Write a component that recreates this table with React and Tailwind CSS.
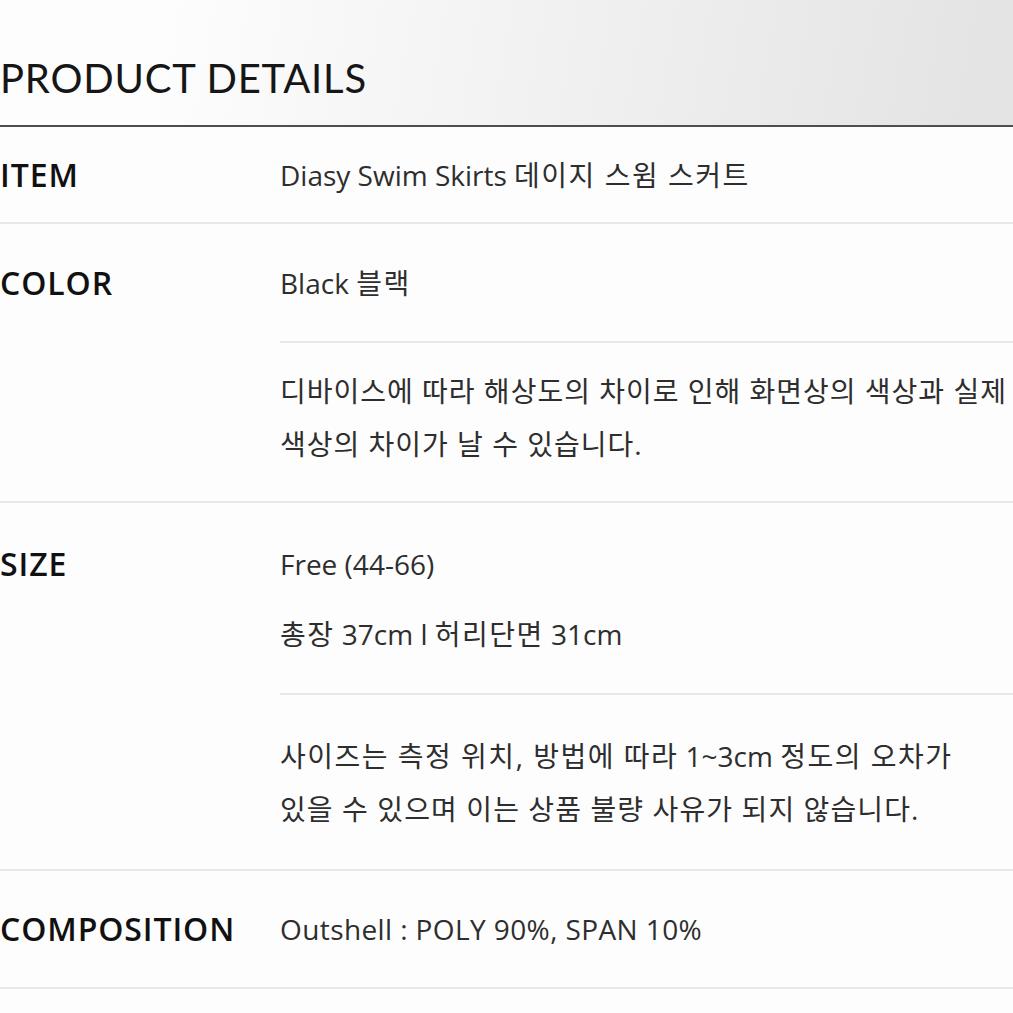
export default function App() {
  const valueFont = { fontFamily: '"Open Sans", "Noto Sans CJK KR", sans-serif' };

  return (
    <div className="w-[1013px] h-[1013px] overflow-hidden bg-[#fdfdfd]">
      <div className="w-[1080px]">
        {/* header */}
        <div className="h-[125px] flex items-end pb-[27px] bg-[linear-gradient(100deg,#fdfdfd_15%,#eeeeee_60%,#e4e4e4_90%)]">
          <h1
            className="text-[40px] leading-none text-[#161616] font-normal tracking-[0.8px]"
            style={{ fontFamily: 'Lato, "Noto Sans", sans-serif' }}
          >
            PRODUCT DETAILS
          </h1>
        </div>
        <div className="h-[2px] bg-[#4e4e4e]"></div>

        {/* ITEM */}
        <div className="grid grid-cols-[280px_1fr] border-b-2 border-[#e8e8e8]">
          <Label className="h-[95px]">ITEM</Label>
          <div className="h-[95px] flex items-center text-[28px] text-[#2e2e2e]" style={valueFont}>
            <span>Diasy Swim Skirts&nbsp;</span>
            <K>데이지 스윔 스커트</K>
          </div>
        </div>

        {/* COLOR */}
        <div className="grid grid-cols-[280px_1fr] border-b-2 border-[#e8e8e8]">
          <Label className="h-[117px]">COLOR</Label>
          <div style={valueFont} className="text-[#2e2e2e]">
            <div className="h-[119px] flex items-center text-[28px] border-b-2 border-[#e8e8e8]">
              <span>Black&nbsp;</span>
              <K>블랙</K>
            </div>
            <div className="pt-[22px] pb-[30px] text-[28px] leading-[53px] whitespace-nowrap tracking-[1px]">
              디바이스에 따라 해상도의 차이로 인해 화면상의 색상과 실제
              <br />
              색상의 차이가 날 수 있습니다.
            </div>
          </div>
        </div>

        {/* SIZE */}
        <div className="grid grid-cols-[280px_1fr] border-b-2 border-[#e8e8e8]">
          <Label className="h-[122px]">SIZE</Label>
          <div style={valueFont} className="text-[#2e2e2e]">
            <div className="h-[192px] flex flex-col pt-[42px] gap-[32px] text-[28px] leading-[38px] border-b-2 border-[#e8e8e8]">
              <div>Free (44-66)</div>
              <div>
                <K>총장</K> 37cm l <K>허리단면</K> 31cm
              </div>
            </div>
            <div className="pt-[35px] pb-[33px] text-[28px] leading-[53px] whitespace-nowrap">
              <K>사이즈는 측정 위치, 방법에 따라</K> 1~3cm <K>정도의 오차가</K>
              <br />
              <span className="tracking-[1.1px]">있을 수 있으며 이는 상품 불량 사유가 되지 않습니다.</span>
            </div>
          </div>
        </div>

        {/* COMPOSITION */}
        <div className="grid grid-cols-[280px_1fr] border-b-2 border-[#e8e8e8]">
          <Label className="h-[116px]">COMPOSITION</Label>
          <div className="h-[116px] flex items-center text-[28px] tracking-[0.4px] text-[#2e2e2e]" style={valueFont}>
            Outshell : POLY 90%, SPAN 10%
          </div>
        </div>
      </div>
    </div>
  );
}

function K({ children }) {
  return <span className="tracking-[1.5px]">{children}</span>;
}

function Label({ className, children }) {
  return (
    <div
      className={"flex items-center text-[32px] font-semibold text-[#111] tracking-[0.9px] " + className}
      style={{ fontFamily: '"Open Sans", "Noto Sans", sans-serif' }}
    >
      {children}
    </div>
  );
}
